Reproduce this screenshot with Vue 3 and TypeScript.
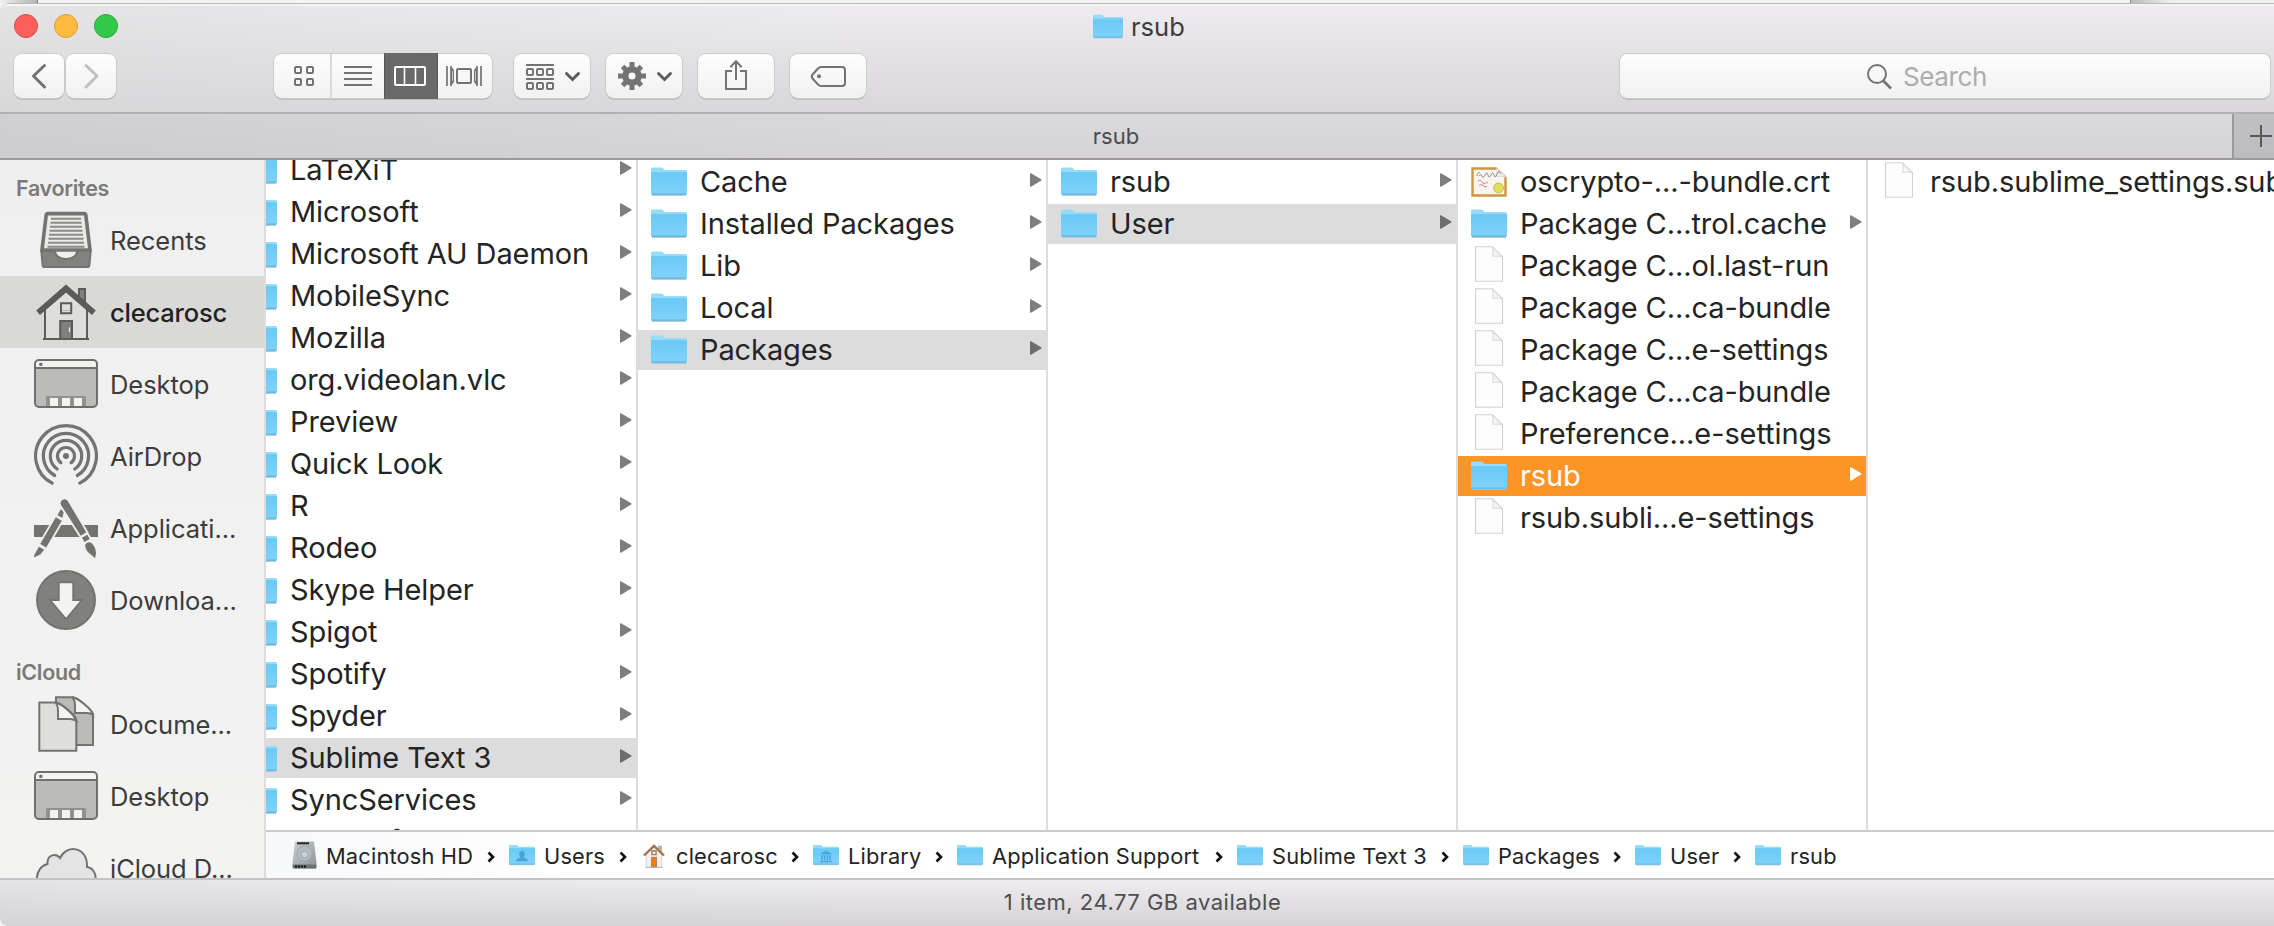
<script setup lang="ts">
interface Entry {
  name: string
  icon: 'folder' | 'file' | 'cert'
  state?: 'path' | 'active'
}

interface Place {
  name: string
  icon: string
  current?: boolean
}

interface Crumb {
  name: string
  icon: string
  width: number
}

const folder = (name: string, state?: Entry['state']): Entry => ({ name, icon: 'folder', state })
const file = (name: string): Entry => ({ name, icon: 'file' })

const columns: { id: string; entries: Entry[] }[] = [
  {
    id: 'support',
    entries: [
      folder('LaTeXiT'), folder('Microsoft'), folder('Microsoft AU Daemon'), folder('MobileSync'),
      folder('Mozilla'), folder('org.videolan.vlc'), folder('Preview'), folder('Quick Look'),
      folder('R'), folder('Rodeo'), folder('Skype Helper'), folder('Spigot'), folder('Spotify'),
      folder('Spyder'), folder('Sublime Text 3', 'path'), folder('SyncServices'),
      folder('syncdefaultsd'),
    ],
  },
  {
    id: 'sublime',
    entries: [
      folder('Cache'), folder('Installed Packages'), folder('Lib'), folder('Local'),
      folder('Packages', 'path'),
    ],
  },
  { id: 'packages', entries: [folder('rsub'), folder('User', 'path')] },
  {
    id: 'user',
    entries: [
      { name: 'oscrypto-...-bundle.crt', icon: 'cert' },
      folder('Package C...trol.cache'),
      file('Package C...ol.last-run'),
      file('Package C...ca-bundle'),
      file('Package C...e-settings'),
      file('Package C...ca-bundle'),
      file('Preference...e-settings'),
      folder('rsub', 'active'),
      file('rsub.subli...e-settings'),
    ],
  },
  { id: 'rsub', entries: [file('rsub.sublime_settings.sublime-settings')] },
]

const places: { title: string; items: Place[] }[] = [
  {
    title: 'Favorites',
    items: [
      { name: 'Recents', icon: 'recents' },
      { name: 'clecarosc', icon: 'home', current: true },
      { name: 'Desktop', icon: 'desktop' },
      { name: 'AirDrop', icon: 'airdrop' },
      { name: 'Applicati...', icon: 'apps' },
      { name: 'Downloa...', icon: 'downloads' },
    ],
  },
  {
    title: 'iCloud',
    items: [
      { name: 'Docume...', icon: 'documents' },
      { name: 'Desktop', icon: 'desktop' },
      { name: 'iCloud D...', icon: 'cloud' },
    ],
  },
]

// width: distance from one crumb's icon to the next one's
const crumbs: Crumb[] = [
  { name: 'Macintosh HD', icon: 'disk', width: 217 },
  { name: 'Users', icon: 'users', width: 132 },
  { name: 'clecarosc', icon: 'house', width: 172 },
  { name: 'Library', icon: 'library', width: 144 },
  { name: 'Application Support', icon: 'folder', width: 280 },
  { name: 'Sublime Text 3', icon: 'folder', width: 226 },
  { name: 'Packages', icon: 'folder', width: 172 },
  { name: 'User', icon: 'folder', width: 120 },
  { name: 'rsub', icon: 'folder', width: 120 },
]
</script>

<template>
  <svg class="sprite" aria-hidden="true">
    <defs>
      <linearGradient id="g-folder" x1="0" y1="0" x2="0" y2="1">
        <stop offset="0" stop-color="#6ac9f6" />
        <stop offset="1" stop-color="#80d3fa" />
      </linearGradient>
      <linearGradient id="g-disk" x1="0" y1="0" x2="1" y2="1">
        <stop offset="0" stop-color="#c9ced1" />
        <stop offset="1" stop-color="#8b9396" />
      </linearGradient>
      <linearGradient id="g-fold" x1="0" y1="1" x2="1" y2="0">
        <stop offset="0" stop-color="#ffffff" />
        <stop offset="1" stop-color="#dddddd" />
      </linearGradient>
    </defs>
    <symbol id="i-folder" viewBox="0 0 36 29">
      <path d="M1 28.4h34" stroke="#b9c6cd" stroke-width="1" />
      <path d="M0 2Q0 .5 1.500 .5H10.500Q11.500 .5 12.200 1.500L13.500 3H34.500Q36 3 36 4.500V27H0Z" fill="#95dcfb" />
      <path d="M0 6H36V26.500Q36 28 34.500 28H1.500Q0 28 0 26.500Z" fill="url(#g-folder)" />
      <path d="M0 5.500H36" stroke="#5fbdea" stroke-width=".6" />
      <path d="M.5 26.500H35.500" stroke="#6fc3ea" stroke-width="1" />
      <path d="M1 27.600H35" stroke="#62b4dc" stroke-width=".8" />
    </symbol>
    <symbol id="i-users" viewBox="0 0 36 29">
      <use href="#i-folder" width="36" height="29" />
      <path d="M18 9c-3 0-4 2-3.800 4.500.2 2 1 3 1.600 3.800.3 1.700-5.800 1.500-6 5.700h16.400c-.2-4.200-6.300-4-6-5.700.6-.8 1.400-1.800 1.600-3.800C22 11 21 9 18 9z" fill="#45a5d8" />
    </symbol>
    <symbol id="i-library" viewBox="0 0 36 29">
      <use href="#i-folder" width="36" height="29" />
      <path d="M9.500 13 18 8.500 26.500 13ZM10.500 14h15v1.200h-15zM11.500 16h2v6h-2zM15 16h2v6h-2zM19 16h2v6h-2zM22.500 16h2v6h-2zM9.500 22.700h17v1.800h-17z" fill="#45a5d8" />
    </symbol>
    <symbol id="i-file" viewBox="0 0 36 36">
      <path d="M4.500 .8H21.500L31.500 11V35.300H4.500Z" fill="#fdfdfd" stroke="#d2d2d2" stroke-width="1.100" stroke-linejoin="round" />
      <path d="M21.500 .8C22.500 4 22 8 21.800 10.300C25 10 30 9.800 31.500 11Z" fill="url(#g-fold)" stroke="#cfcfcf" stroke-width=".9" />
    </symbol>
    <symbol id="i-cert" viewBox="0 0 36 30">
      <path d="M1.500 1.500H26L34.500 10V28.500H1.500Z" fill="#f7f5f0" stroke="#cf963f" stroke-width="2.400" />
      <path d="M25.500 0H36V10Z" fill="#fff" />
      <path d="M25.500 .5Q27 5 25.500 9.500 31 8.500 35.300 10.300Z" fill="#efefef" stroke="#cfcfcf" stroke-width=".7" />
      <path d="M6 9Q6 5 9 6M8 9q2-3 3 0t3-1 3 0 3 0 3 0 3-1 4 0" fill="none" stroke="#777" stroke-width=".8" />
      <path d="M7 14q3-2 4 1t6 0M8 18.500q2-2 4 0t4 1" fill="none" stroke="#e5838b" stroke-width="1" />
      <circle cx="27.500" cy="21" r="5" fill="#e2dc5a" stroke="#b9ad35" stroke-width=".7" />
    </symbol>
    <symbol id="i-disk" viewBox="0 0 26 28">
      <path d="M3 .5H22L24.500 22V26.500Q24.500 27.500 23.500 27.500H1.500Q.5 27.500 .5 26.500V22Z" fill="url(#g-disk)" />
      <path d="M.8 23.500H24.200V26.500Q24 27.500 23 27.500H2Q1 27.500 .8 26.500Z" fill="#6b7173" />
      <path d="M5 2.300H17" stroke="#25292b" stroke-width="2" />
      <circle cx="12.500" cy="12.500" r="7.500" fill="#b5bcbf" stroke="#99a1a4" stroke-width=".8" />
      <circle cx="12.500" cy="13.500" r="3.500" fill="#ccd1d3" stroke="#939b9e" stroke-width=".8" />
      <path d="M3 25.500h12" stroke="#111" stroke-width="2" stroke-dasharray="2 1" />
    </symbol>
    <symbol id="i-house" viewBox="0 0 24 27">
      <path d="M16.500 3h4v7h-4z" fill="#b9aea2" />
      <path d="M3.500 12 12 4 20.500 12V26H3.500Z" fill="#f1f0ee" stroke="#c9c7c4" stroke-width=".7" />
      <path d="M1.200 13.500 12 3.200 22.800 13.500" fill="none" stroke="#9c7450" stroke-width="2.600" />
      <path d="M9.700 8.500h4.600v4.200h-4.600z" fill="#dfe9f0" stroke="#a4683a" stroke-width="1.200" />
      <path d="M9.300 15.500h5.400V26H9.300z" fill="#ef7d1e" stroke="#b9672a" stroke-width=".8" />
      <path d="M2.500 26.300h19" stroke="#b9b7b4" stroke-width="1" />
    </symbol>

    <symbol id="i-recents" viewBox="0 0 64 64">
      <path d="M14 5.600H50Q51.500 5.600 51.800 7L56 42H8L12.200 7Q12.500 5.600 14 5.600Z" fill="#e9e9e8" stroke="#737371" stroke-width="3.600" />
      <path d="M17 10.700H47M16.500 14.700H47.500M16 18.700H48M15.500 22.700H48.500M15 26.700H49M14.500 30.700H49.500M14 34.700H50M13.500 38.700H50.500" stroke="#8b8b89" stroke-width="2" />
      <path d="M7.300 43H21C21 48 26 51 32 51S43 48 43 43H56.700L55.300 58Q55 59 54 59H10Q9 59 8.700 58Z" fill="#81817f" stroke="#737371" stroke-width="2" />
    </symbol>
    <symbol id="i-home" viewBox="0 0 64 64">
      <path d="M45 23V9h6v18z" fill="#80807e" stroke="#5b5b59" stroke-width="2" />
      <path d="M11 59V29L32 11 53 29V59Z" fill="#dededc" stroke="#5b5b59" stroke-width="2" />
      <path d="M32 4.400 61.800 30.500 58 35 32 12.500 6 35 2.200 30.500Z" fill="#5b5b59" />
      <path d="M27 23.200H37.200V33.200H27Z" fill="#dededc" stroke="#5b5b59" stroke-width="2" />
      <path d="M28 30.500h8" stroke="#b5b5b3" stroke-width="1" />
      <path d="M26.200 41H38V59H26.200Z" fill="#80807e" stroke="#5b5b59" stroke-width="2" />
      <path d="M35.500 47.500V52" stroke="#eee" stroke-width="1.200" />
      <path d="M9 59H55" stroke="#5b5b59" stroke-width="2" />
    </symbol>
    <symbol id="i-desktop" viewBox="0 0 64 64">
      <rect x="1" y="8" width="62" height="47" rx="4" fill="#bbbbba" />
      <path d="M1 16V12Q1 8 5 8H59Q63 8 63 12V16Z" fill="#f3f3f2" />
      <path d="M12 54V45.500Q12 44 13.500 44H50.500Q52 44 52 45.500V54Z" fill="#91918f" />
      <path d="M16 46h8v8h-8zM28 46h8v8h-8zM40 46h8v8h-8z" fill="#f3f3f2" />
      <rect x="1" y="8" width="62" height="47" rx="4" fill="none" stroke="#6f6f6d" stroke-width="2" />
      <path d="M1 16H63" stroke="#6f6f6d" stroke-width="2" />
      <rect x="5.200" y="10.800" width="3.200" height="3.200" rx="1" fill="#6f6f6d" />
    </symbol>
    <symbol id="i-airdrop" viewBox="0 0 64 64">
      <g fill="none" stroke="#737371" stroke-width="3.200" stroke-linecap="round">
        <path d="M18.200 59.100A30.400 30.400 0 1 1 45.800 59.100" />
        <path d="M20.700 51.500A22.600 22.600 0 1 1 43.300 51.500" />
        <path d="M23.200 45A15.700 15.700 0 1 1 40.800 45" />
        <path d="M26.900 38.800A8.500 8.500 0 1 1 37.100 38.800" />
      </g>
      <circle cx="32" cy="32" r="3" fill="#737371" />
    </symbol>
    <symbol id="i-apps" viewBox="0 0 64 64">
      <path d="M0 29H64V41H0Z" fill="#737371" />
      <g stroke="#f0f0ef" stroke-width="1.800" fill="#737371">
        <path d="M21.500 20 29 24.400 12.500 52.800 5 48.400Z" />
        <path d="M25.500 13.500C27 11.500 31 13.500 30.500 16.500L29 23.300 22.300 19.500Z" />
        <path d="M4.500 49.500 11.500 53.500 7 59 -1 63 -.5 58.500Z" />
        <path d="M26.300 9.500C24.500 6 27 3 30 2.300 32 2 33.500 3 34.500 4.500L53.500 36.500 46.500 41Z" />
        <path d="M46.700 41.500 53.600 37.500 57 43.300 50.200 47.300Z" />
        <path d="M50.500 48C53 44.500 57 44.500 59.500 48 63 52 64 58 61 64 59 60 53 58 51.500 54 50.500 52 50 50 50.500 48Z" />
      </g>
    </symbol>
    <symbol id="i-downloads" viewBox="0 0 64 64">
      <circle cx="32" cy="32" r="29" fill="#80807e" stroke="#737371" stroke-width="2" />
      <path d="M24.800 14.300H39.200V32H48L32 51 16 32H24.800Z" fill="#f3f3f2" stroke="#737371" stroke-width="1.800" />
    </symbol>
    <symbol id="i-documents" viewBox="0 0 64 64">
      <g stroke="#737371" stroke-width="2">
        <path d="M22 5.300H39C44 6 58 18 59 22V53H22Z" fill="#bbbbba" />
        <path d="M38 5.300C40.500 7 41 10 41 14V21H53C56 21 58 22 59 23 58 17 44 6 38 5.300Z" fill="#f3f3f2" />
        <path d="M5.300 10.500H22C27 11 41 23 42.300 27V58.800H5.300Z" fill="#dededd" />
        <path d="M21 10.500C23.500 12 24 15 24 19V27H36C39 27 41 28 42.300 29 41 23 27 11 21 10.500Z" fill="#f3f3f2" />
      </g>
    </symbol>
    <symbol id="i-cloud" viewBox="0 0 64 64">
      <path d="M10 54C0 52 0 31 13.500 28C13 18 22 17 26 22C32 8 54 10 53 31C64 32 65 52 54 54Z" fill="#e4e4e4" stroke="#737371" stroke-width="2" />
    </symbol>
  </svg>

  <div class="screen">
    <div class="behind">
      <span class="behind-left"></span>
      <span class="behind-right"></span>
    </div>

    <div class="window">
      <header class="titlebar">
        <div class="title-row">
          <div class="lights">
            <i class="light red"></i>
            <i class="light amber"></i>
            <i class="light green"></i>
          </div>
          <div class="title">
            <svg class="title-icon"><use href="#i-folder" /></svg>
            <span>rsub</span>
          </div>
        </div>

        <div class="toolbar">
          <div class="nav">
            <button class="btn nav-btn">
              <svg width="50" height="44"><path d="M30.500 11.500 19.500 22 30.500 33" fill="none" stroke="#737373" stroke-width="3" stroke-linecap="round" stroke-linejoin="round" /></svg>
            </button>
            <button class="btn nav-btn">
              <svg width="50" height="44"><path d="M20 11.500 31 22 20 33" fill="none" stroke="#c0c0c0" stroke-width="3" stroke-linecap="round" stroke-linejoin="round" /></svg>
            </button>
          </div>

          <div class="views btn">
            <span class="view first">
              <svg width="22" height="22" fill="none" stroke="#737373" stroke-width="2">
                <rect x="2" y="2" width="6" height="6" rx="1" /><rect x="14" y="2" width="6" height="6" rx="1" />
                <rect x="2" y="14" width="6" height="6" rx="1" /><rect x="14" y="14" width="6" height="6" rx="1" />
              </svg>
            </span>
            <span class="view">
              <svg width="28" height="20"><path d="M0 1h28M0 7h28M0 13h28M0 19h28" stroke="#737373" stroke-width="2" /></svg>
            </span>
            <span class="view selected">
              <svg width="32" height="20">
                <rect x="1" y="1" width="30" height="18" rx="1" fill="none" stroke="#fff" stroke-width="2" />
                <path d="M10.500 1v18M21.500 1v18" stroke="#fff" stroke-width="1.600" />
              </svg>
            </span>
            <span class="view last">
              <svg width="36" height="20">
                <path d="M1 0v20M5 0v20M31 0v20M35 0v20" stroke="#737373" stroke-width="1.700" />
                <path d="M5 0 8 4V16L5 20ZM31 0 28 4V16L31 20Z" fill="#737373" />
                <path d="M6.500 5V15M29.500 5V15" stroke="#f4f4f4" stroke-width=".6" />
                <rect x="11" y="3" width="14" height="14" rx="1" fill="none" stroke="#737373" stroke-width="2" />
              </svg>
            </span>
          </div>

          <button class="btn tool">
            <svg width="76" height="44" fill="none" stroke="#737373" stroke-width="2">
              <path d="M12 11h28M12 25h28" />
              <rect x="13" y="15" width="6" height="6" rx="1" /><rect x="23" y="15" width="6" height="6" rx="1" /><rect x="33" y="15" width="6" height="6" rx="1" />
              <rect x="13" y="29" width="6" height="6" rx="1" /><rect x="23" y="29" width="6" height="6" rx="1" /><rect x="33" y="29" width="6" height="6" rx="1" />
              <path d="M52.500 19.500 58.500 25.500 64.500 19.500" stroke="#5c5c5c" stroke-width="3" stroke-linecap="round" />
            </svg>
          </button>
          <button class="btn tool">
            <svg width="76" height="44">
              <g stroke="#737373" stroke-width="5">
                <path d="M26 8V36M12 22H40M16.600 12.600 35.400 31.400M35.400 12.600 16.600 31.400" />
              </g>
              <circle cx="26" cy="22" r="9.800" fill="#737373" />
              <circle cx="26" cy="22" r="3.500" fill="#f8f8f8" />
              <path d="M52.500 19.500 58.500 25.500 64.500 19.500" fill="none" stroke="#5c5c5c" stroke-width="3" stroke-linecap="round" />
            </svg>
          </button>
          <button class="btn tool">
            <svg width="76" height="44" fill="none" stroke="#737373" stroke-width="2">
              <path d="M34 17H28V35H48V17H42M38 26V7.500M32.300 13.200 38 7.300 43.700 13.200" />
            </svg>
          </button>
          <button class="btn tool">
            <svg width="76" height="44">
              <path d="M31 13H52Q55 13 55 16V29Q55 32 52 32H31Q29.500 32 28 30.500L22.500 24.500Q21 22.500 22.500 20.500L28 14.500Q29.500 13 31 13Z" fill="none" stroke="#737373" stroke-width="2" />
              <circle cx="29" cy="22.300" r="2" fill="#737373" />
            </svg>
          </button>

          <div class="btn search">
            <svg width="28" height="28" fill="none" stroke="#737373" stroke-width="2">
              <circle cx="11" cy="11" r="9" /><path d="M17 17.500 25 25.500" stroke-width="2.600" />
            </svg>
            <span>Search</span>
          </div>
        </div>
      </header>

      <div class="tabs">
        <div class="tab">rsub</div>
        <div class="tab-add">
          <svg width="22" height="22"><path d="M11 0V22M0 11H22" stroke="#5a5a5a" stroke-width="2" /></svg>
        </div>
      </div>

      <div class="body">
        <aside class="sidebar">
          <section v-for="group in places" :key="group.title">
            <h2>{{ group.title }}</h2>
            <div v-for="place in group.items" :key="place.name" class="place" :class="{ current: place.current }">
              <svg class="place-icon"><use :href="`#i-${place.icon}`" /></svg>
              <span>{{ place.name }}</span>
            </div>
          </section>
        </aside>

        <main class="browser">
          <div class="columns">
            <div v-for="column in columns" :key="column.id" class="column" :class="column.id">
              <div v-for="(entry, i) in column.entries" :key="i" class="entry" :class="entry.state">
                <svg class="entry-icon" :class="entry.icon"><use :href="`#i-${entry.icon}`" /></svg>
                <span class="entry-name">{{ entry.name }}</span>
                <svg v-if="entry.icon === 'folder'" class="arrow" viewBox="0 0 12 14">
                  <path d="M0 1Q0 0 1 .3L11.200 6.200Q12 7 11.200 7.600L1 13.700Q0 14 0 13Z" fill="currentColor" />
                </svg>
              </div>
            </div>
          </div>

          <nav class="pathbar">
            <div v-for="(crumb, i) in crumbs" :key="crumb.name" class="crumb" :style="{ width: crumb.width + 'px' }">
              <svg class="crumb-icon" :class="crumb.icon"><use :href="`#i-${crumb.icon}`" /></svg>
              <span>{{ crumb.name }}</span>
              <svg v-if="i < crumbs.length - 1" class="sep" viewBox="0 0 8 12">
                <path d="M1.500 1.500 6 6 1.500 10.500" fill="none" stroke="#111" stroke-width="2.600" />
              </svg>
            </div>
          </nav>
        </main>
      </div>

      <footer class="status">1 item, 24.77 GB available</footer>
    </div>
  </div>
</template>

<style>
html,
body {
  margin: 0;
  overflow: hidden;
}
</style>

<style scoped>
.sprite {
  position: absolute;
  width: 0;
  height: 0;
}

.screen {
  display: flex;
  flex-direction: column;
  width: 2274px;
  height: 926px;
  overflow: hidden;
  background: #f3f3f3;
  font-family: Inter, 'Liberation Sans', sans-serif;
  color: #242424;
  white-space: nowrap;
}

.behind {
  display: flex;
  justify-content: space-between;
  height: 3px;
}
.behind-left {
  width: 37px;
  border-right: 1px solid #777;
  background: linear-gradient(90deg, #f0f0f0, #b4b4b4);
}
.behind-right {
  width: 143px;
  border-left: 1px solid #888;
  background: linear-gradient(90deg, #bcbcbc, #efefef 40px);
}

.window {
  box-sizing: border-box;
  display: flex;
  flex-direction: column;
  height: 923px;
  border-top: 1px solid #b9b9b9;
  border-radius: 9px 0 0 8px;
  overflow: hidden;
  background: #fff;
}

.titlebar {
  box-sizing: border-box;
  height: 110px;
  border-bottom: 2px solid #b2b0b2;
  box-shadow: inset 0 2px 0 #f4f3f5;
  background:
    linear-gradient(90deg, rgba(215, 217, 217, 0.45), rgba(215, 217, 217, 0) 900px),
    linear-gradient(#eeecef, #d9d7da);
}

.title-row {
  display: flex;
  align-items: center;
  height: 50px;
  padding-left: 14px;
}
.lights {
  display: flex;
  gap: 16px;
  margin-top: -6px;
}
.light {
  box-sizing: border-box;
  width: 24px;
  height: 24px;
  border: 1px solid;
  border-radius: 50%;
}
.red { background: #fc605c; border-color: #df4744; }
.amber { background: #fdbc40; border-color: #de9f34; }
.green { background: #34c84a; border-color: #27a938; }

.title {
  display: flex;
  align-items: center;
  gap: 8px;
  margin: -5px 0 0 975px;
  font-size: 25.5px;
  line-height: 36px;
  color: #3d3d3d;
}
.title-icon {
  width: 30px;
  height: 25px;
}

.toolbar {
  display: flex;
  padding-left: 14px;
  height: 44px;
}
.btn {
  box-sizing: border-box;
  height: 44px;
  padding: 0;
  border: 0;
  border-radius: 8px;
  background: linear-gradient(#fdfdfd, #f1f1f1);
  box-shadow: 0 0 0 1px #cbcacc, 0 1.500px 0.500px #a2a1a3;
}
.btn svg {
  display: block;
}
.nav {
  display: flex;
  gap: 2px;
}
.nav-btn {
  width: 50px;
}

.views {
  display: flex;
  width: 218px;
  margin-left: 158px;
}
.view {
  display: flex;
  align-items: center;
  justify-content: center;
  width: 52px;
  height: 44px;
}
.view.first {
  box-sizing: border-box;
  width: 58px;
  padding-left: 3px;
  border-right: 2px solid #d9d9d9;
}
.view.selected {
  box-sizing: border-box;
  width: 54px;
  height: 46px;
  margin: -1px 0;
  padding-right: 2px;
  background: #696969;
  box-shadow: inset 1px 0 #575757, inset -1px 0 #575757;
}
.view.last {
  box-sizing: border-box;
  width: 54px;
  padding-right: 2px;
}

.tool {
  width: 76px;
  margin-right: 16px;
}
.views + .tool {
  margin-left: 22px;
}

.search {
  display: flex;
  align-items: center;
  gap: 9px;
  width: 650px;
  margin-left: 738px;
  padding-left: 246px;
  border-radius: 7px;
  font-size: 26px;
  color: #adadad;
}
.search svg {
  margin-top: 1px;
}
.search span {
  margin-top: 1px;
  letter-spacing: -0.4px;
}

.tabs {
  display: flex;
  box-sizing: border-box;
  height: 46px;
  border-bottom: 2px solid #9b999c;
}
.tab {
  flex: 0 0 2232px;
  text-align: center;
  font-size: 22px;
  line-height: 45px;
  color: #4c4c4c;
  background:
    linear-gradient(90deg, rgba(190, 190, 192, 0.35), rgba(190, 190, 192, 0) 900px),
    linear-gradient(#dad9db, #d5d3d6);
}
.tab-add {
  flex: 1;
  display: flex;
  align-items: center;
  padding-left: 16px;
  border-left: 2px solid #9b999c;
  background: linear-gradient(#c1c0c2, #bcbbbd);
}

.body {
  display: flex;
  height: 718px;
}

.sidebar {
  flex: 0 0 264px;
  border-right: 2px solid #dcdcdc;
  overflow: hidden;
  background: linear-gradient(#efefef, #f3f3f2);
}
.sidebar h2 {
  height: 32px;
  margin: 0;
  padding: 12px 0 0 16px;
  font-size: 21.5px;
  font-weight: 600;
  line-height: 32px;
  letter-spacing: -0.3px;
  color: #7a7a78;
}
.sidebar section + section h2 {
  padding-top: 20px;
}
.place {
  display: flex;
  align-items: center;
  gap: 12px;
  height: 72px;
  padding-left: 34px;
  font-size: 25.5px;
  letter-spacing: -0.05px;
  color: #3c3c3b;
}
.place.current {
  background: #d9d9d8;
  font-weight: 500;
  letter-spacing: -0.2px;
  color: #222;
}
.place-icon {
  width: 64px;
  height: 64px;
}

.browser {
  flex: 1;
  min-width: 0;
}
.columns {
  display: flex;
  height: 670px;
  overflow: hidden;
}
.column {
  box-sizing: border-box;
  flex: 0 0 410px;
  padding-top: 2px;
  border-right: 2px solid #dcdcdc;
  overflow: hidden;
}
.column.support {
  flex-basis: 372px;
  padding-top: 0;
}
.column.support .entry:first-child {
  margin-top: -10px;
}
.column.support .entry {
  padding-left: 0;
}
.column.support .entry-icon {
  margin-left: -25px;
}
.column.rsub {
  border-right: 0;
}
.entry {
  display: flex;
  height: 40px;
  margin-bottom: 2px;
  padding: 0 4px 0 13px;
  color: #7e7e7e;
}
.entry-icon {
  flex: none;
  width: 36px;
  height: 29px;
  margin-top: 5px;
}
.entry-icon.file {
  height: 36px;
  margin-top: 0;
}
.entry-icon.cert {
  height: 30px;
}
.entry-name {
  flex: 1;
  margin-left: 13px;
  font-size: 29px;
  line-height: 39px;
  letter-spacing: -0.1px;
  color: #242424;
}
.column.support .entry:last-child .entry-name {
  line-height: 37px;
}
.arrow {
  width: 12px;
  height: 14px;
  margin-top: 11px;
}
.entry.path {
  background: #dcdcdc;
  color: #6d6d6d;
}
.entry.active {
  background: #fd9426;
  color: #fff;
}
.entry.active .entry-name {
  color: #fff;
}

.pathbar {
  display: flex;
  height: 46px;
  padding-left: 26px;
  border-top: 2px solid #cbcbcb;
  background: linear-gradient(90deg, #f7f8fa, #fff 320px);
}
.crumb {
  display: flex;
  align-items: center;
  font-size: 21.8px;
  letter-spacing: 0.18px;
  color: #242424;
}
.crumb span {
  margin-top: 2px;
}
.crumb-icon {
  flex: none;
  width: 26px;
  height: 22px;
  margin-right: 9px;
}
.crumb-icon.disk {
  height: 28px;
  margin-right: 8px;
}
.crumb-icon.house {
  height: 25px;
}
.sep {
  width: 8px;
  height: 12px;
  margin: 3px 14px 0 auto;
}

.status {
  box-sizing: border-box;
  flex: 1;
  border-top: 2px solid #c3c2c4;
  padding-left: 11px;
  text-align: center;
  font-size: 22px;
  line-height: 45px;
  letter-spacing: 0.5px;
  color: #4e4e50;
  background:
    linear-gradient(90deg, rgba(210, 212, 212, 0.35), rgba(210, 212, 212, 0) 900px),
    linear-gradient(#efedf0, #d4d2d5);
}
</style>
